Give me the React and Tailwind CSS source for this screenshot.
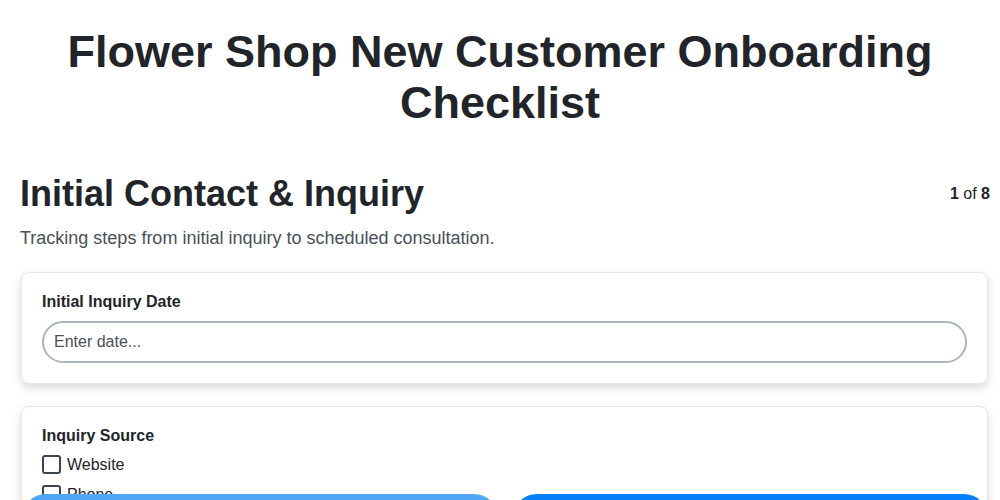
import React, { useState } from "react";

const sources = ["Website", "Phone", "Walk-in", "Referral", "Social Media"];

const App = () => {
  const [date, setDate] = useState("");
  const [picked, setPicked] = useState([]);

  const toggle = (s) =>
    setPicked((p) => (p.includes(s) ? p.filter((x) => x !== s) : [...p, s]));

  return (
    <div className="min-h-screen bg-white text-[#212529] font-['Liberation_Sans',Arial,sans-serif]">
      <h1 className="pt-[26px] px-10 text-center text-[45px] leading-[51px] font-bold">
        Flower Shop New Customer Onboarding Checklist
      </h1>

      <div className="pl-5 pr-[10px] pb-24">
        <div className="mt-[44px] flex items-center justify-between">
          <h2 className="text-[36px] leading-[43px] font-bold">Initial Contact &amp; Inquiry</h2>
          <div className="text-base">
            <span className="font-bold">1</span> of <span className="font-bold">8</span>
          </div>
        </div>
        <p className="mt-[10px] text-lg leading-[27px] text-[#495057]">
          Tracking steps from initial inquiry to scheduled consultation.
        </p>

        <div className="mt-[20px] ml-px mr-[2px] rounded-lg border border-[#e5e7eb] bg-white p-5 shadow-[0_4px_10px_rgba(0,0,0,0.15)]">
          <label className="block text-base leading-[18px] font-bold mb-[10px]">Initial Inquiry Date</label>
          <input
            type="text"
            value={date}
            onChange={(e) => setDate(e.target.value)}
            placeholder="Enter date..."
            className="w-full rounded-full border-2 border-[#adb5bd] px-[10px] py-2 text-base leading-[22px] text-[#212529] placeholder-[#495057] outline-none"
          />
        </div>

        <div className="mt-[22px] ml-px mr-[2px] rounded-lg border border-[#e5e7eb] bg-white p-5 shadow-[0_4px_10px_rgba(0,0,0,0.15)]">
          <div className="text-base leading-[18px] font-bold mb-[10px]">Inquiry Source</div>
          <div className="flex flex-col gap-[11px]">
            {sources.map((s) => (
              <label key={s} className="flex items-center gap-[6px] cursor-pointer text-base leading-[18px]">
                <span
                  onClick={() => toggle(s)}
                  className={`h-[19px] w-[19px] rounded-[3px] border-2 border-[#3d4451] ${picked.includes(s) ? "bg-[#007bff]" : "bg-white"}`}
                />
                {s}
              </label>
            ))}
          </div>
        </div>
      </div>

      <div className="fixed bottom-0 left-0 right-0 flex gap-[15px] pl-[22px] pr-[12px]">
        <button className="flex-1 h-12 translate-y-[-6px] mb-[-48px] rounded-full bg-[#52a6f8] text-white font-bold">
          Previous
        </button>
        <button className="flex-1 h-12 translate-y-[-6px] mb-[-48px] rounded-full bg-[#0580fb] text-white font-bold">
          Next
        </button>
      </div>
    </div>
  );
};

export default App;
